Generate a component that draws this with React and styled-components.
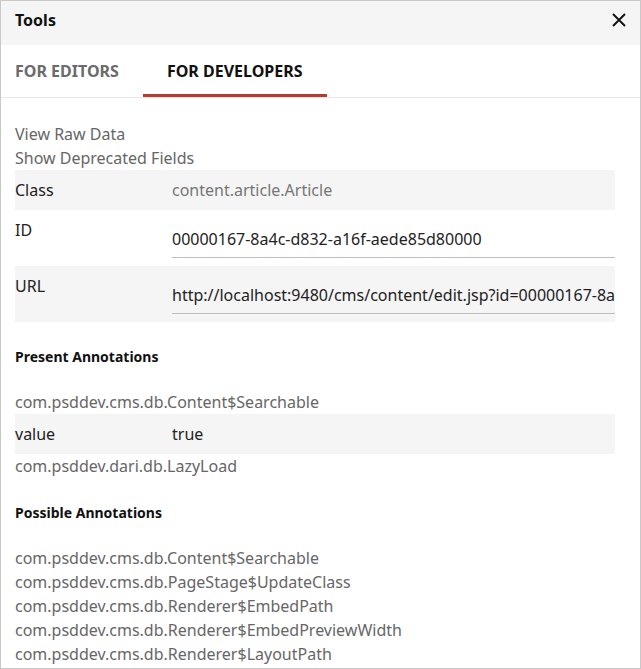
import React, { useState } from "react";
import styled, { createGlobalStyle } from "styled-components";

const GlobalStyle = createGlobalStyle`
  html, body {
    margin: 0;
    padding: 0;
    background: #fff;
  }
  * {
    box-sizing: border-box;
  }
`;

const present = [
  {
    name: "com.psddev.cms.db.Content$Searchable",
    fields: [{ key: "value", value: "true" }],
  },
  { name: "com.psddev.dari.db.LazyLoad", fields: [] },
];

const possible = [
  "com.psddev.cms.db.Content$Searchable",
  "com.psddev.cms.db.PageStage$UpdateClass",
  "com.psddev.cms.db.Renderer$EmbedPath",
  "com.psddev.cms.db.Renderer$EmbedPreviewWidth",
  "com.psddev.cms.db.Renderer$LayoutPath",
];

export default function App() {
  const [tab, setTab] = useState("dev");

  return (
    <>
      <GlobalStyle />
      <Panel>
        <Header>
          <Title>Tools</Title>
          <CloseButton aria-label="Close">
            <svg width="14" height="14" viewBox="0 0 14 14">
              <path d="M1 1 L13 13 M13 1 L1 13" stroke="#111" strokeWidth="1.9" fill="none" />
            </svg>
          </CloseButton>
        </Header>

        <TabList>
          <Tab active={tab === "editors"} onClick={() => setTab("editors")}>
            For Editors
          </Tab>
          <Tab active={tab === "dev"} onClick={() => setTab("dev")}>
            For Developers
          </Tab>
        </TabList>

        <Content>
          <LinkText>View Raw Data</LinkText>
          <LinkText>Show Deprecated Fields</LinkText>

          <FieldRow shaded>
            <FieldLabel>Class</FieldLabel>
            <StaticValue>content.article.Article</StaticValue>
          </FieldRow>
          <FieldRow>
            <FieldLabel>ID</FieldLabel>
            <FieldInput readOnly value="00000167-8a4c-d832-a16f-aede85d80000" />
          </FieldRow>
          <FieldRow shaded>
            <FieldLabel>URL</FieldLabel>
            <FieldInput
              readOnly
              value="http://localhost:9480/cms/content/edit.jsp?id=00000167-8a4c-d832-a16f-aede85d80000"
            />
          </FieldRow>

          <SectionTitle>Present Annotations</SectionTitle>
          <List>
            {present.map((a) => (
              <React.Fragment key={a.name}>
                <LinkText>{a.name}</LinkText>
                {a.fields.map((f) => (
                  <ValueRow key={f.key}>
                    <FieldLabel>{f.key}</FieldLabel>
                    <DarkValue>{f.value}</DarkValue>
                  </ValueRow>
                ))}
              </React.Fragment>
            ))}
          </List>

          <SectionTitle>Possible Annotations</SectionTitle>
          <List>
            {possible.map((p) => (
              <LinkText key={p}>{p}</LinkText>
            ))}
          </List>
        </Content>
      </Panel>
    </>
  );
}

const Panel = styled.div`
  width: 641px;
  height: 669px;
  border: 1px solid #c9c9c9;
  background: #fff;
  overflow: hidden;
  font-family: "Noto Sans", "Open Sans", sans-serif;
  font-size: 16px;
  line-height: 24px;
  color: #222;
`;

const Header = styled.div`
  height: 44px;
  background: #f5f5f5;
  display: flex;
  align-items: center;
  justify-content: space-between;
  padding: 0 14px 6px 14px;
`;

const Title = styled.h2`
  margin: 0;
  font-size: 16px;
  font-weight: 700;
  color: #111;
`;

const CloseButton = styled.button`
  border: 0;
  background: none;
  padding: 0;
  display: flex;
  cursor: pointer;
`;

const TabList = styled.div`
  display: flex;
  height: 53px;
  border-bottom: 1px solid #e8e8e8;
`;

const Tab = styled.button`
  height: 52px;
  padding: 3px 24px 0;
  border: 0;
  border-bottom: 3px solid ${(p) => (p.active ? "#b83b30" : "transparent")};
  background: none;
  font-family: inherit;
  font-size: 16px;
  font-weight: 700;
  text-transform: uppercase;
  color: ${(p) => (p.active ? "#111" : "#6b6b6b")};
  cursor: pointer;

  &:first-child {
    padding-left: 14px;
  }
`;

const Content = styled.div`
  padding: 24px 25px 0 14px;
`;

const LinkText = styled.div`
  color: #666;
`;

const FieldRow = styled.div`
  display: grid;
  grid-template-columns: 157px 1fr;
  align-items: start;
  padding: 8px 0;
  min-height: 39px;
  background: ${(p) => (p.shaded ? "#f5f5f5" : "transparent")};
`;

const FieldLabel = styled.div`
  color: #222;
`;

const StaticValue = styled.div`
  color: #777;
`;

const DarkValue = styled.div`
  color: #222;
`;

const FieldInput = styled.input`
  width: 100%;
  min-width: 0;
  margin-top: 9px;
  padding: 0;
  height: 31px;
  border: 0;
  border-bottom: 1px solid #bdbdbd;
  background: transparent;
  font-family: inherit;
  font-size: 16px;
  line-height: 24px;
  color: #222;
  outline: none;
  padding-bottom: 6px;
`;

const SectionTitle = styled.h3`
  margin: 26px 0 24px;
  font-size: 14px;
  line-height: 18px;
  font-weight: 700;
  color: #111;
`;

const List = styled.div`
  display: flex;
  flex-direction: column;
`;

const ValueRow = styled.div`
  display: grid;
  grid-template-columns: 157px 1fr;
  padding: 8px 0;
  background: #f5f5f5;
`;
